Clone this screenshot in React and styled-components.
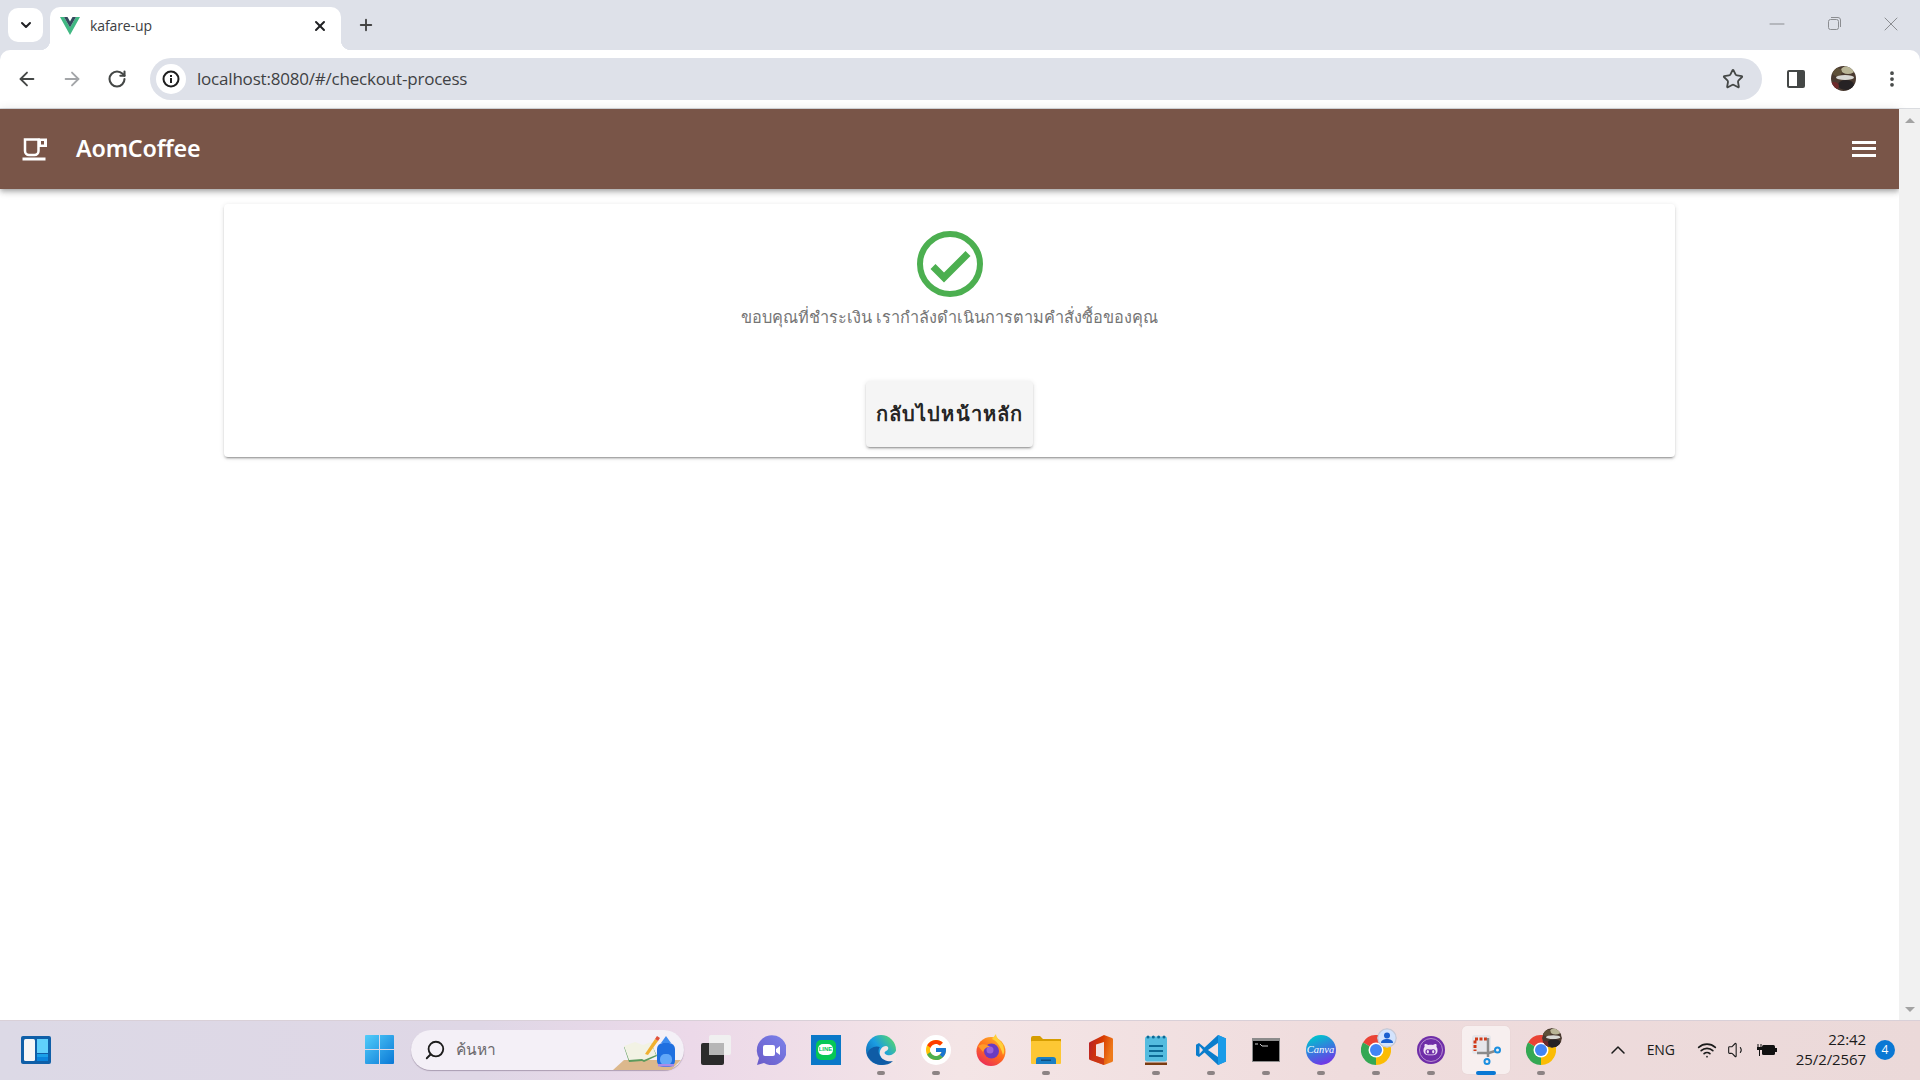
import styled, { createGlobalStyle } from "styled-components";
import { FcGoogle } from "react-icons/fc";
import { FaGithubAlt } from "react-icons/fa";
import {
  ArrowLeft,
  ArrowRight,
  RotateCw,
  Star,
  MoreVertical,
  X,
  Plus,
  ChevronDown,
  ChevronUp,
  Minus,
  Search,
  Wifi,
  Volume1,
} from "lucide-react";

const GlobalStyle = createGlobalStyle`
  html, body {
    margin: 0;
    padding: 0;
    overflow: hidden;
    background: #fff;
    font-family: "Open Sans", "Noto Sans", sans-serif;
  }
  * { box-sizing: border-box; }
`;

const Screen = styled.div`
  width: 1920px;
  height: 1080px;
  display: flex;
  flex-direction: column;
  overflow: hidden;
`;

/* browser tab strip */
const TabStrip = styled.div`
  height: 50px;
  background: #dee1e9;
  display: flex;
  align-items: flex-end;
  padding-left: 8px;
`;

const TabSearch = styled.div`
  width: 35px;
  height: 34px;
  margin-bottom: 8px;
  background: #fff;
  border-radius: 10px;
  display: flex;
  align-items: center;
  justify-content: center;
  color: #202124;
`;

const Tab = styled.div`
  position: relative;
  width: 291px;
  height: 43px;
  margin-left: 7px;
  background: #fff;
  border-radius: 10px 10px 0 0;
  display: flex;
  align-items: center;
  padding: 0 13px 6px 10px;
  color: #3c4043;
  &::before,
  &::after {
    content: "";
    position: absolute;
    bottom: 0;
    width: 10px;
    height: 10px;
  }
  &::before {
    left: -10px;
    background: radial-gradient(circle at 0 0, #dee1e9 10px, #fff 10.5px);
  }
  &::after {
    right: -10px;
    background: radial-gradient(circle at 100% 0, #dee1e9 10px, #fff 10.5px);
  }
`;

const TabTitle = styled.span`
  flex: 1;
  margin-left: 10px;
  font-family: "Open Sans", sans-serif;
  font-size: 14px;
  letter-spacing: -0.1px;
  color: #3c4043;
`;

const NewTab = styled.div`
  margin: 0 0 16px 16px;
  display: flex;
  color: #444;
`;

const WindowControls = styled.div`
  margin-left: auto;
  height: 50px;
  display: flex;
  align-items: center;
  padding: 0 17px 2px 0;
  gap: 33px;
  color: #8b8d91;
`;

const RestoreIcon = styled.svg`
  display: block;
`;

/* address bar row */
const ToolbarBack = styled.div`
  background: #dee1e9;
`;

const Toolbar = styled.div`
  height: 59px;
  background: #fff;
  border-radius: 10px 10px 0 0;
  border-bottom: 1px solid #dadce0;
  display: flex;
  align-items: center;
  padding: 0 18px 1px 4.5px;
  color: #444746;
`;

const NavButton = styled.div`
  width: 45px;
  display: flex;
  justify-content: center;
  color: ${(p) => (p.$muted ? "#a3a5a8" : "#444746")};
`;

const Omnibox = styled.div`
  margin-left: 10.5px;
  flex: 1;
  height: 42px;
  background: #dee1e9;
  border-radius: 21px;
  display: flex;
  align-items: center;
  padding: 0 18px 0 6px;
`;

const InfoBadge = styled.div`
  width: 30px;
  height: 30px;
  border-radius: 50%;
  background: #fff;
  display: flex;
  align-items: center;
  justify-content: center;
`;

const Url = styled.span`
  flex: 1;
  margin-left: 11px;
  font-family: "Open Sans", sans-serif;
  font-size: 17px;
  letter-spacing: -0.2px;
  color: #3f4144;
`;

const ToolbarEnd = styled.div`
  margin-left: 25px;
  display: flex;
  align-items: center;
  gap: 26px;
`;

/* page */
const Viewport = styled.div`
  flex: 1;
  min-height: 0;
  display: flex;
`;

const Page = styled.div`
  flex: 1;
  background: #fff;
  display: flex;
  flex-direction: column;
`;

const AppBar = styled.header`
  height: 80px;
  background: #795548;
  color: #fff;
  display: flex;
  align-items: center;
  padding: 0 23px 0 22px;
  box-shadow: 0 2px 4px -1px rgba(0, 0, 0, 0.2), 0 4px 5px 0 rgba(0, 0, 0, 0.14),
    0 1px 10px 0 rgba(0, 0, 0, 0.12);
`;

const Brand = styled.div`
  margin: -2px 0 0 28px;
  font-family: "Noto Sans", sans-serif;
  font-size: 23.3px;
  font-weight: 600;
  letter-spacing: -0.2px;
  flex: 1;
`;

const Hamburger = styled.div`
  width: 24px;
  display: flex;
  flex-direction: column;
  gap: 3.5px;
  margin-top: -1px;
  span {
    height: 3px;
    background: #fff;
  }
`;

const Card = styled.section`
  width: 1451px;
  height: 253px;
  margin: 15px auto 0 224px;
  background: #fff;
  border-radius: 4px;
  box-shadow: 0 3px 1px -2px rgba(0, 0, 0, 0.2), 0 2px 2px 0 rgba(0, 0, 0, 0.14),
    0 1px 5px 0 rgba(0, 0, 0, 0.12);
  display: flex;
  flex-direction: column;
  align-items: center;
  padding-top: 27px;
`;

const Message = styled.p`
  margin: 7px 0 0;
  font-family: "Noto Sans", sans-serif;
  font-size: 16.3px;
  line-height: 26px;
  color: #757575;
`;

const HomeButton = styled.button`
  width: 167px;
  height: 66px;
  margin-top: 51px;
  padding: 0;
  border: 0;
  border-radius: 4px;
  background: #f5f5f5;
  color: rgba(0, 0, 0, 0.87);
  font-family: "Noto Sans", sans-serif;
  font-size: 20px;
  font-weight: 600;
  letter-spacing: 1.15px;
  box-shadow: 0 3px 1px -2px rgba(0, 0, 0, 0.2), 0 2px 2px 0 rgba(0, 0, 0, 0.14),
    0 1px 5px 0 rgba(0, 0, 0, 0.12);
`;

const Scrollbar = styled.div`
  width: 21px;
  background: #f1f1f1;
  display: flex;
  flex-direction: column;
  justify-content: space-between;
  align-items: center;
  padding: 9px 0 8px;
`;

const ScrollArrow = styled.div`
  width: 0;
  height: 0;
  border-left: 5px solid transparent;
  border-right: 5px solid transparent;
  ${(p) =>
    p.$down
      ? "border-top: 5px solid #a3a3a3;"
      : "border-bottom: 5px solid #a3a3a3;"}
`;

/* windows taskbar */
const Taskbar = styled.footer`
  height: 60px;
  border-top: 1px solid #d9d0d8;
  padding-bottom: 2px;
  background: linear-gradient(
    90deg,
    #dcd9e6 0%,
    #dfd7e6 25%,
    #ecd9e9 36%,
    #f4e5e6 50%,
    #efdcdd 70%,
    #ebd9d9 100%
  );
  display: grid;
  grid-template-columns: 352px 1fr auto;
  align-items: center;
`;

const WidgetSlot = styled.div`
  padding-left: 21px;
  display: flex;
`;

const Center = styled.div`
  display: flex;
  align-items: center;
`;

const IconSlot = styled.div`
  position: relative;
  width: 55px;
  height: 48px;
  display: flex;
  align-items: center;
  justify-content: center;
  border-radius: 5px;
  ${(p) =>
    p.$active &&
    "background: rgba(255,255,255,0.55); box-shadow: 0 0 1px rgba(0,0,0,.12); width: 48px; margin: 0 3.5px;"}
  &::after {
    content: "";
    display: ${(p) => (p.$dot || p.$active ? "block" : "none")};
    position: absolute;
    bottom: -1px;
    left: 50%;
    transform: translateX(-50%);
    width: ${(p) => (p.$active ? "20px" : "8px")};
    height: 4px;
    border-radius: 2px;
    background: ${(p) => (p.$active ? "#0a78d4" : "#8c8384")};
  }
`;

const SearchPill = styled.div`
  position: relative;
  width: 273px;
  height: 40px;
  margin: 0 4px 0 4px;
  border-radius: 20px;
  background: #f4f0f7;
  box-shadow: 0 1px 1px rgba(90, 70, 100, 0.4);
  display: flex;
  align-items: center;
  padding-left: 13px;
  color: #1c1c1c;
`;

const SearchGlyph = styled(Search)`
  transform: scaleX(-1);
`;

const SearchLabel = styled.span`
  margin-left: 10px;
  font-family: "Noto Sans", sans-serif;
  font-size: 15.5px;
  color: #6c6a6e;
`;

const SearchArt = styled.svg`
  position: absolute;
  right: 3px;
  bottom: 0;
`;

const LineTile = styled.div`
  width: 30px;
  height: 30px;
  background: #0a78c8;
  display: flex;
  align-items: center;
  justify-content: center;
`;

const LineBubble = styled.div`
  width: 20px;
  height: 20px;
  border-radius: 5px;
  background: #06c755;
  display: flex;
  align-items: center;
  justify-content: center;
`;

const LineText = styled.span`
  background: #fff;
  color: #06c755;
  font-family: "Liberation Sans", sans-serif;
  font-size: 6px;
  font-weight: 700;
  border-radius: 5px;
  padding: 2px 1px 3px;
  line-height: 1;
`;

const CanvaDisc = styled.div`
  width: 30px;
  height: 30px;
  border-radius: 50%;
  background: linear-gradient(160deg, #00c4cc 10%, #3f6fe0 55%, #7d2ae8 95%);
  color: #fff;
  display: flex;
  align-items: center;
  justify-content: center;
  font-family: "Liberation Serif", serif;
  font-style: italic;
  font-size: 10.5px;
`;

const GoogleDisc = styled.div`
  width: 30px;
  height: 30px;
  border-radius: 50%;
  background: #fff;
  display: flex;
  align-items: center;
  justify-content: center;
`;

const GithubDisc = styled.div`
  width: 28px;
  height: 28px;
  border-radius: 50%;
  background: #6f2da8;
  color: #efe2f5;
  display: flex;
  align-items: center;
  justify-content: center;
  &::before {
    content: "";
    position: absolute;
    width: 22px;
    height: 22px;
    border-radius: 50%;
    border: 1.5px solid #b68fd0;
  }
`;

const Overlay = styled.div`
  position: absolute;
  top: 2px;
  right: 6px;
  width: 20px;
  height: 20px;
  border-radius: 50%;
  display: flex;
  overflow: hidden;
`;

const Tray = styled.div`
  display: flex;
  align-items: center;
  padding-right: 25px;
  color: #1b1b1b;
`;

const TrayIcon = styled.div`
  display: flex;
  align-items: center;
  justify-content: center;
  width: 30px;
`;

const Lang = styled.span`
  margin: 0 17px 0 17px;
  font-family: "Open Sans", sans-serif;
  font-size: 14px;
  letter-spacing: -0.1px;
`;

const Clock = styled.div`
  margin: -1px 0 0 14px;
  text-align: right;
  font-family: "Open Sans", sans-serif;
  font-size: 15px;
  line-height: 20px;
  letter-spacing: -0.1px;
`;

const Badge = styled.div`
  margin-left: 9px;
  width: 20px;
  height: 20px;
  border-radius: 50%;
  background: #0a78d4;
  color: #fff;
  font-family: "Open Sans", sans-serif;
  font-size: 12px;
  display: flex;
  align-items: center;
  justify-content: center;
`;

const VueMark = () => (
  <svg width="20" height="18" viewBox="0 0 20 18">
    <path d="M0 0h4l6 10.500L16 0h4L10 18z" fill="#41b883" />
    <path d="M4 0h3.500L10 4.500 12.500 0H16l-6 10.500z" fill="#35495e" />
  </svg>
);

const InfoIcon = () => (
  <svg width="20" height="20" viewBox="0 0 20 20" fill="none">
    <circle cx="10" cy="10" r="7.500" stroke="#1f1f1f" strokeWidth="2" />
    <rect x="9" y="9" width="2" height="5" fill="#1f1f1f" />
    <rect x="9" y="6" width="2" height="2" fill="#1f1f1f" />
  </svg>
);

const SidePanelIcon = () => (
  <svg width="18" height="18" viewBox="0 0 18 18">
    <rect x="0" y="0" width="18" height="18" rx="2" fill="#444746" />
    <rect x="2" y="2" width="8" height="14" fill="#fff" />
  </svg>
);

const Avatar = ({ size = 25 }) => (
  <svg width={size} height={size} viewBox="0 0 25 25">
    <defs>
      <clipPath id="avatarClip">
        <circle cx="12.500" cy="12.500" r="12.500" />
      </clipPath>
    </defs>
    <g clipPath="url(#avatarClip)">
      <rect width="25" height="25" fill="#4a3a30" />
      <ellipse cx="17" cy="4" rx="7" ry="4" fill="#b9b596" />
      <ellipse cx="6" cy="6" rx="5" ry="4" fill="#5e5038" />
      <ellipse cx="14" cy="11.500" rx="9" ry="2.500" fill="#d8d8d4" />
      <ellipse cx="15" cy="19" rx="8" ry="5" fill="#262224" />
      <ellipse cx="3" cy="20" rx="5" ry="4" fill="#6d2a2a" />
    </g>
  </svg>
);

const CoffeeIcon = () => (
  <svg width="26" height="24" viewBox="0 0 26 24" fill="none">
    <path d="M3 2.500h13.500V14a4 4 0 0 1-4 4H7a4 4 0 0 1-4-4z" stroke="#fff" strokeWidth="2.500" />
    <path d="M16.500 1.500H25V10h-8.500z" fill="#fff" />
    <rect x="19" y="4" width="3" height="3.500" fill="#795548" />
    <rect x="0.500" y="20.500" width="23" height="3" fill="#fff" />
  </svg>
);

const SuccessIcon = () => (
  <svg width="66" height="66" viewBox="0 0 66 66" fill="none">
    <circle cx="33" cy="33" r="30" stroke="#4caf50" strokeWidth="6" />
    <path d="M16 35.500 27 46.500 51 22.500" stroke="#4caf50" strokeWidth="7" />
  </svg>
);

const WidgetsIcon = () => (
  <svg width="30" height="28" viewBox="0 0 30 28">
    <rect width="30" height="28" rx="2" fill="#0f5fa8" />
    <rect x="3" y="3" width="11" height="22" rx="1.500" fill="#f6f6f6" />
    <rect x="16" y="3" width="11" height="14" fill="#5fd0fb" />
    <rect x="16" y="18" width="11" height="3" fill="#1aa0e8" />
    <rect x="16" y="21" width="11" height="4" fill="#0a84dc" />
  </svg>
);

const StartIcon = () => (
  <svg width="29" height="29" viewBox="0 0 29 29">
    <defs>
      <linearGradient id="startA" x1="0" y1="0" x2="1" y2="1">
        <stop offset="0" stopColor="#52cdfa" />
        <stop offset="1" stopColor="#0a78d6" />
      </linearGradient>
    </defs>
    <path
      d="M1 0h13v14H0V1a1 1 0 0 1 1-1zM15 0h13a1 1 0 0 1 1 1v13H15zM0 15h14v14H1a1 1 0 0 1-1-1zM15 15h14v13a1 1 0 0 1-1 1H15z"
      fill="url(#startA)"
    />
  </svg>
);

const SearchArtwork = () => (
  <SearchArt width="68" height="36" viewBox="0 0 68 36">
    <path d="M0 36 11 26h57l-10 10z" fill="#dcb88c" />
    <path d="M11 13 22 9l8 3 8-3 6 13-13 6-2-1-13 1z" fill="#5c9a5c" />
    <path d="M11 12 22 8l8 3 8-3 5 13-12 5-2-1-13 1z" fill="#f2f2e4" />
    <path d="M32 20 42 5l3 2-10 14z" fill="#f0b030" />
    <path d="M42 5l2-3 3 2-2 3z" fill="#e0503a" />
    <rect x="44" y="9" width="18" height="24" rx="6" fill="#1f6fe0" />
    <path d="M48 9 53 2 58 9z" fill="#3d8cf0" />
    <rect x="47" y="20" width="12" height="11" rx="5" fill="#62a8f8" />
    <rect x="45" y="30" width="16" height="2.500" fill="#a98ce8" />
  </SearchArt>
);

const TaskViewIcon = () => (
  <svg width="30" height="30" viewBox="0 0 30 30">
    <rect x="0" y="8" width="23" height="22" rx="2" fill="#2b2b2b" />
    <rect x="8" y="0" width="22" height="20" rx="2" fill="#f0f0f0" />
    <rect x="8" y="8" width="15" height="12" fill="#b6b6b6" />
  </svg>
);

const MeetIcon = () => (
  <svg width="30" height="30" viewBox="0 0 30 30">
    <defs>
      <linearGradient id="meet" x1="0" y1="1" x2="1" y2="0">
        <stop offset="0" stopColor="#6a5bc8" />
        <stop offset="1" stopColor="#7b83eb" />
      </linearGradient>
    </defs>
    <path d="M1 30l2-7a15 15 0 1 1 5 5z" fill="url(#meet)" />
    <rect x="7" y="10" width="12" height="11" rx="2" fill="#fff" />
    <path d="M20 14l4-3v9l-4-3z" fill="#fff" />
  </svg>
);

const EdgeIcon = () => (
  <svg width="30" height="30" viewBox="0 0 30 30">
    <defs>
      <linearGradient id="edgeA" x1="0" y1="1" x2="1" y2="0.200">
        <stop offset="0" stopColor="#0c59a4" />
        <stop offset="0.550" stopColor="#1b9de2" />
        <stop offset="1" stopColor="#54d56f" />
      </linearGradient>
    </defs>
    <circle cx="15" cy="15" r="15" fill="url(#edgeA)" />
    <path d="M14 20C13 15 16 11 20 11c3 0 3 4 0 5-2 1-2 3 1 4 4 1 7-1 9-4v14h-9c-3-2-5-6-7-10z" fill="#f4e5e6" />
    <path d="M1 19c2-6 8-9 13-7-2 2-2 6 0 9 2 4 8 6 13 5-3 3-7 4-11 4C9 30 3 25 1 19z" fill="#0f5ca6" />
  </svg>
);

const FirefoxIcon = () => (
  <svg width="30" height="32" viewBox="0 0 30 32">
    <defs>
      <linearGradient id="fox" x1="0.800" y1="0" x2="0.200" y2="1">
        <stop offset="0" stopColor="#ffb52a" />
        <stop offset="0.500" stopColor="#ff6a1c" />
        <stop offset="1" stopColor="#e9275f" />
      </linearGradient>
    </defs>
    <circle cx="15" cy="17.500" r="14.500" fill="url(#fox)" />
    <path d="M20 0c0 4 5 7 7 11 1 4 2 7 0 10C24 10 20 7 16 5z" fill="#ffcf3a" />
    <circle cx="15.500" cy="17" r="7.500" fill="#6a3bc2" />
    <circle cx="14" cy="16" r="3.500" fill="#9a62d8" />
    <path d="M2 12c4-3 9-2 12 1-4 0-6 2-7 5z" fill="#ff9a2a" />
  </svg>
);

const FolderIcon = () => (
  <svg width="30" height="28" viewBox="0 0 30 28">
    <path d="M0 2a2 2 0 0 1 2-2h7l3 3h18v4H0z" fill="#d69d00" />
    <rect x="0" y="5" width="30" height="23" rx="1" fill="#fdc734" />
    <path d="M5 28v-4a3 3 0 0 1 3-3h14a3 3 0 0 1 3 3v4z" fill="#1b7fc4" />
    <rect x="10" y="23.500" width="10" height="1.500" fill="#0e4f80" />
  </svg>
);

const OfficeIcon = () => (
  <svg width="24" height="30" viewBox="0 0 24 30">
    <defs>
      <linearGradient id="officeA" x1="0" y1="0" x2="1" y2="0.300">
        <stop offset="0" stopColor="#b41e2e" />
        <stop offset="0.550" stopColor="#d83b01" />
        <stop offset="1" stopColor="#ee7a1a" />
      </linearGradient>
    </defs>
    <path
      fillRule="evenodd"
      d="M1 7 15 0l8 3a1.500 1.500 0 0 1 1 1.500v21a1.500 1.500 0 0 1-1 1.500l-8 3-14-5a1.500 1.500 0 0 1-1-1.500V8.500A1.500 1.500 0 0 1 1 7zM7 9.500V21l8 2.500V7z"
      fill="url(#officeA)"
    />
    <path d="M1 24.500 7 21l8 2.500V30z" fill="#c8341a" opacity="0.800" />
  </svg>
);

const NotepadIcon = () => (
  <svg width="22" height="30" viewBox="0 0 22 30">
    <rect x="0" y="1.500" width="22" height="25" rx="2" fill="#54bcdf" />
    <rect x="0" y="27.500" width="22" height="2.500" fill="#7a3b10" />
    <rect x="4" y="10" width="14" height="2" fill="#0c6a96" />
    <rect x="4" y="15" width="14" height="2" fill="#0c6a96" />
    <rect x="4" y="20" width="14" height="2" fill="#0c6a96" />
    <circle cx="3" cy="2" r="1.500" fill="#0c6a96" />
    <circle cx="8.300" cy="2" r="1.500" fill="#0c6a96" />
    <circle cx="13.600" cy="2" r="1.500" fill="#0c6a96" />
    <circle cx="19" cy="2" r="1.500" fill="#0c6a96" />
  </svg>
);

const VsCodeIcon = () => (
  <svg width="30" height="30" viewBox="0 0 30 30">
    <path d="M22 0 8.500 12.500 3 8 0 9.800v10.400L3 22l5.500-4.500L22 30l8-3.500v-23z" fill="#0a7dcc" />
    <path d="M22 0l8 3.500v23L22 30z" fill="#1a9be8" />
    <path d="M22 8 12 15l10 7z" fill="#f3e2e3" />
    <path d="M3.500 11 7 15l-3.500 4z" fill="#f3e2e3" />
  </svg>
);

const TerminalIcon = () => (
  <svg width="28" height="24" viewBox="0 0 28 24">
    <rect width="28" height="24" fill="#8c8c8c" />
    <rect x="1" y="3" width="26" height="20" fill="#000" />
    <path d="M3 6h3M8 6l2 2h6" stroke="#ccc" strokeWidth="1" fill="none" />
  </svg>
);

const ChromeIcon = () => (
  <svg width="30" height="30" viewBox="0 0 30 30">
    <path d="M15 15 2 7.500A15 15 0 0 1 28 7.500z" fill="#ea4335" />
    <path d="M15 15 2 7.500A15 15 0 0 0 15 30z" fill="#34a853" />
    <path d="M15 15 28 7.500A15 15 0 0 1 15 30z" fill="#fbbc04" />
    <circle cx="15" cy="15" r="7.500" fill="#fff" />
    <circle cx="15" cy="15" r="6" fill="#4285f4" />
  </svg>
);

const PersonBadge = () => (
  <svg width="20" height="20" viewBox="0 0 20 20">
    <circle cx="10" cy="10" r="10" fill="#c7c9d6" />
    <circle cx="10" cy="10" r="8.500" fill="#d3e3fd" />
    <circle cx="10" cy="7.500" r="3" fill="#1a5fd0" />
    <path d="M4 15c0-3 3-4 6-4s6 1 6 4z" fill="#1a5fd0" />
  </svg>
);

const SnipIcon = () => (
  <svg width="30" height="30" viewBox="0 0 30 30" fill="none">
    <rect x="1" y="0" width="19" height="19" rx="3" fill="#e6e6ea" />
    <path d="M16 4H4v12" stroke="#d13a18" strokeWidth="3" strokeDasharray="3 1.500" />
    <path d="M17 3 17 22" stroke="#8a8a8a" strokeWidth="2.500" />
    <path d="M6 18h12l6-2" stroke="#8a8a8a" strokeWidth="2.500" />
    <circle cx="26.500" cy="15" r="2.500" stroke="#1a8fe0" strokeWidth="2" />
    <circle cx="16" cy="26.500" r="2.500" stroke="#1a8fe0" strokeWidth="2" />
  </svg>
);

const TrayBattery = () => (
  <svg width="20" height="16" viewBox="0 0 20 16">
    <path d="M1 2v3M4 2v3" stroke="#111" />
    <path d="M0 5h5v3H3v6H2V8H0z" fill="#111" />
    <rect x="5" y="3" width="13" height="10" rx="1.500" fill="#111" />
    <rect x="18" y="6" width="2" height="4" fill="#111" />
  </svg>
);

const App = () => {
  return (
    <Screen>
      <GlobalStyle />
      <TabStrip>
        <TabSearch>
          <ChevronDown size={16} strokeWidth={3} />
        </TabSearch>
        <Tab>
          <VueMark />
          <TabTitle>kafare-up</TabTitle>
          <X size={16} strokeWidth={3} color="#202124" />
        </Tab>
        <NewTab>
          <Plus size={18} strokeWidth={2.5} />
        </NewTab>
        <WindowControls>
          <Minus size={24} strokeWidth={1} />
          <RestoreIcon width="24" height="24" viewBox="0 0 24 24" fill="none" stroke="#8b8d91">
            <rect x="6.500" y="7.500" width="10" height="10" rx="2" />
            <path d="M9 5.500h7a2.500 2.500 0 0 1 2.500 2.500v7" />
          </RestoreIcon>
          <X size={24} strokeWidth={1} />
        </WindowControls>
      </TabStrip>

      <ToolbarBack>
        <Toolbar>
          <NavButton>
            <ArrowLeft size={22} strokeWidth={2} />
          </NavButton>
          <NavButton $muted>
            <ArrowRight size={22} strokeWidth={2} />
          </NavButton>
          <NavButton>
            <RotateCw size={20} strokeWidth={2.5} />
          </NavButton>
          <Omnibox>
            <InfoBadge>
              <InfoIcon />
            </InfoBadge>
            <Url>localhost:8080/#/checkout-process</Url>
            <Star size={22} strokeWidth={2} />
          </Omnibox>
          <ToolbarEnd>
            <SidePanelIcon />
            <Avatar />
            <MoreVertical size={20} strokeWidth={2.5} />
          </ToolbarEnd>
        </Toolbar>
      </ToolbarBack>

      <Viewport>
        <Page>
          <AppBar>
            <CoffeeIcon />
            <Brand>AomCoffee</Brand>
            <Hamburger>
              <span />
              <span />
              <span />
            </Hamburger>
          </AppBar>
          <Card>
            <SuccessIcon />
            <Message>ขอบคุณที่ชำระเงิน เรากำลังดำเนินการตามคำสั่งซื้อของคุณ</Message>
            <HomeButton>กลับไปหน้าหลัก</HomeButton>
          </Card>
        </Page>
        <Scrollbar>
          <ScrollArrow />
          <ScrollArrow $down />
        </Scrollbar>
      </Viewport>

      <Taskbar>
        <WidgetSlot>
          <WidgetsIcon />
        </WidgetSlot>
        <Center>
          <IconSlot>
            <StartIcon />
          </IconSlot>
          <SearchPill>
            <SearchGlyph size={22} strokeWidth={2} />
            <SearchLabel>ค้นหา</SearchLabel>
            <SearchArtwork />
          </SearchPill>
          <IconSlot>
            <TaskViewIcon />
          </IconSlot>
          <IconSlot>
            <MeetIcon />
          </IconSlot>
          <IconSlot>
            <LineTile>
              <LineBubble>
                <LineText>LINE</LineText>
              </LineBubble>
            </LineTile>
          </IconSlot>
          <IconSlot $dot>
            <EdgeIcon />
          </IconSlot>
          <IconSlot $dot>
            <GoogleDisc>
              <FcGoogle size={24} />
            </GoogleDisc>
          </IconSlot>
          <IconSlot>
            <FirefoxIcon />
          </IconSlot>
          <IconSlot $dot>
            <FolderIcon />
          </IconSlot>
          <IconSlot>
            <OfficeIcon />
          </IconSlot>
          <IconSlot $dot>
            <NotepadIcon />
          </IconSlot>
          <IconSlot $dot>
            <VsCodeIcon />
          </IconSlot>
          <IconSlot $dot>
            <TerminalIcon />
          </IconSlot>
          <IconSlot $dot>
            <CanvaDisc>Canva</CanvaDisc>
          </IconSlot>
          <IconSlot $dot>
            <ChromeIcon />
            <Overlay>
              <PersonBadge />
            </Overlay>
          </IconSlot>
          <IconSlot $dot>
            <GithubDisc>
              <FaGithubAlt size={15} />
            </GithubDisc>
          </IconSlot>
          <IconSlot $active>
            <SnipIcon />
          </IconSlot>
          <IconSlot $dot>
            <ChromeIcon />
            <Overlay>
              <Avatar size={20} />
            </Overlay>
          </IconSlot>
        </Center>
        <Tray>
          <ChevronUp size={24} strokeWidth={1.5} />
          <Lang>ENG</Lang>
          <TrayIcon>
            <Wifi size={20} strokeWidth={2} />
          </TrayIcon>
          <TrayIcon>
            <Volume1 size={20} strokeWidth={1.3} />
          </TrayIcon>
          <TrayIcon>
            <TrayBattery />
          </TrayIcon>
          <Clock>
            22:42
            <br />
            25/2/2567
          </Clock>
          <Badge>4</Badge>
        </Tray>
      </Taskbar>
    </Screen>
  );
};

export default App;
